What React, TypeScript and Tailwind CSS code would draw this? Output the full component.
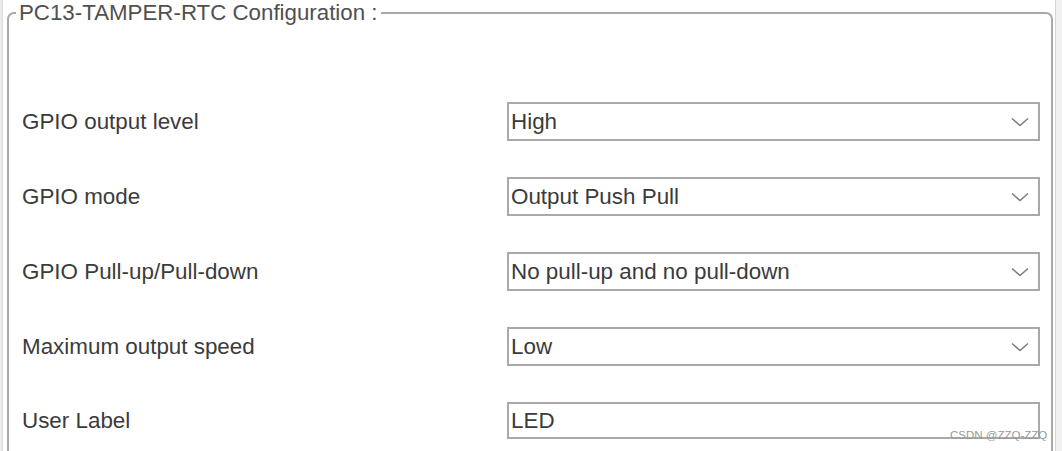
const rows = [
  { label: 'GPIO output level', value: 'High' },
  { label: 'GPIO mode', value: 'Output Push Pull' },
  { label: 'GPIO Pull-up/Pull-down', value: 'No pull-up and no pull-down' },
  { label: 'Maximum output speed', value: 'Low' },
];

function Chevron() {
  return (
    <svg width="18" height="10" viewBox="0 0 18 10" className="shrink-0">
      <polyline points="1,1.5 9,8.5 17,1.5" fill="none" stroke="#7a7a7a" strokeWidth="1.4" />
    </svg>
  );
}

export default function App() {
  return (
    <div
      className="relative w-[1062px] h-[451px] overflow-hidden bg-white flex text-[#3b3b3b]"
      style={{ fontFamily: '"Liberation Sans", Arial, sans-serif' }}
    >
      {/* left edge of the window */}
      <div className="w-[3px] h-full bg-[#ebebeb] border-r border-[#d9d9d9]" />

      <div className="w-[4px]" />

      {/* group box */}
      <fieldset className="w-[1046px] h-[520px] shrink-0 border-2 border-[#a9a9a9] rounded-[7px] pl-[7px] pr-[11px] pt-[77px]">
        <legend className="px-[3px] text-[22.3px] leading-[25px] text-[#505050]">
          PC13-TAMPER-RTC Configuration :
        </legend>

        <div className="flex flex-col gap-[36px]">
          {rows.map((row) => (
            <div key={row.label} className="flex items-center h-[39px]">
              <div className="w-[491px] pl-[6px] text-[22.4px]">{row.label}</div>
              <div className="flex-1 h-full flex items-center justify-between border-2 border-[#a9a9a9] pl-[2px] pr-[9px] text-[22.4px]">
                <span>{row.value}</span>
                <Chevron />
              </div>
            </div>
          ))}

          <div className="flex items-center h-[37px]">
            <div className="w-[491px] pl-[6px] text-[22.4px]">User Label</div>
            <div className="flex-1 h-full flex items-center border-2 border-[#a9a9a9] pl-[2px] text-[22.4px]">
              LED
            </div>
          </div>
        </div>
      </fieldset>

      <div className="w-[2px]" />

      {/* right edge of the window */}
      <div className="flex-1 h-full bg-[#f0f0f0] border-l border-[#d4d4d4]" />

      {/* watermark */}
      <div className="absolute left-[950px] top-[428px] text-[11.5px] leading-[14px] text-[#999999]">
        CSDN @ZZQ-ZZQ
      </div>
    </div>
  );
}
